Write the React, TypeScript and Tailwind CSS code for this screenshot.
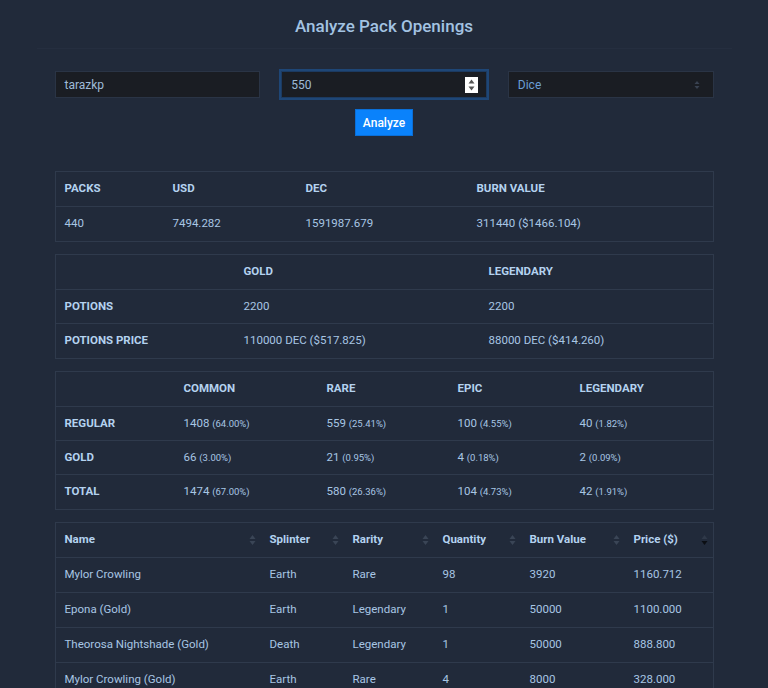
import React from "react";

const txt = "text-[#a8c6e4]";
const head = "text-[#b4d2ef]";

function SortIcon({ active }: { active?: boolean }) {
  return (
    <svg
      width="7"
      height="12"
      viewBox="0 0 7 12"
      className="absolute right-[5px] top-1/2 -translate-y-1/2"
    >
      <path d="M0.5 5 L3.5 1 L6.5 5 Z" fill={active ? "#2f3949" : "#3a4556"} />
      <path d="M0.5 7 L3.5 11 L6.5 7 Z" fill={active ? "#0b0e13" : "#3a4556"} />
    </svg>
  );
}

type Cell = React.ReactNode;

function Grid({
  cols,
  header,
  rows,
  boldFirst,
}: {
  cols: string;
  header: Cell[];
  rows: Cell[][];
  boldFirst?: boolean;
}) {
  return (
    <div className="border border-[#2f3a4c]">
      <div className={`grid ${cols} h-[35px] items-center border-b border-[#2f3a4c]`}>
        {header.map((h, i) => (
          <div key={i} className={`pl-[9px] text-[11.5px] font-bold ${head}`}>
            {h}
          </div>
        ))}
      </div>
      {rows.map((r, ri) => (
        <div
          key={ri}
          className={`grid ${cols} h-[34px] items-center ${
            ri < rows.length - 1 ? "border-b border-[#2f3a4c]" : ""
          }`}
        >
          {r.map((c, ci) => (
            <div
              key={ci}
              className={`pl-[9px] text-[11.5px] ${boldFirst && ci === 0 ? `font-bold ${head}` : txt}`}
            >
              {c}
            </div>
          ))}
        </div>
      ))}
    </div>
  );
}

const P = ({ n, p }: { n: string; p: string }) => (
  <span>
    {n} <span className="text-[9.5px]">({p})</span>
  </span>
);

export default function App() {
  const cardCols = "grid-cols-[205px_83px_90px_87px_104px_1fr]";
  const cards = [
    ["Mylor Crowling", "Earth", "Rare", "98", "3920", "1160.712"],
    ["Epona (Gold)", "Earth", "Legendary", "1", "50000", "1100.000"],
    ["Theorosa Nightshade (Gold)", "Death", "Legendary", "1", "50000", "888.800"],
    ["Mylor Crowling (Gold)", "Earth", "Rare", "4", "8000", "328.000"],
    ["Venari Wavesmith", "Water", "Rare", "10", "400", "120.000"],
  ];
  const cardHead = ["Name", "Splinter", "Rarity", "Quantity", "Burn Value", "Price ($)"];
  return (
    <div className="min-h-screen bg-[#212a3a] font-['Roboto',sans-serif] pb-10">
      <div className="mx-auto w-[659px]">
        <h1 className="pt-[15px] text-center text-[17px] leading-[23px] font-medium text-[#a3c3e2]">
          Analyze Pack Openings
        </h1>
        <div className="mt-[10px] -mx-[18px] border-t border-[#252e3f]" />
        <div className="mt-[22px] grid grid-cols-3 gap-[21px]">
          <div className="h-[27px] bg-[#1a1d23] border border-[#2a3445] flex items-center pl-[9px] text-[12px] text-[#9fbbd8]">
            tarazkp
          </div>
          <div className="relative h-[27px] bg-[#1a1d23] border border-[#1c3a60] outline outline-[2px] outline-[#1e4676] flex items-center pl-[9px] text-[12px] text-[#9fbbd8]">
            550
            <div className="absolute right-[8px] top-[5px] w-[13px] h-[16px] bg-white flex flex-col items-center justify-center gap-[2px]">
              <svg width="7" height="5" viewBox="0 0 7 5">
                <path d="M0.5 4.5 L3.5 0.5 L6.5 4.5 Z" fill="#555" />
              </svg>
              <svg width="7" height="5" viewBox="0 0 7 5">
                <path d="M0.5 0.5 L3.5 4.5 L6.5 0.5 Z" fill="#555" />
              </svg>
            </div>
          </div>
          <div className="relative h-[27px] bg-[#1a1d23] border border-[#2a3445] flex items-center pl-[9px] text-[12px] text-[#6a9fd6]">
            Dice
            <svg
              width="6"
              height="10"
              viewBox="0 0 6 10"
              className="absolute right-[13px] top-1/2 -translate-y-1/2"
            >
              <path d="M0.5 4 L3 1 L5.5 4 Z" fill="#3a4352" />
              <path d="M0.5 6 L3 9 L5.5 6 Z" fill="#3a4352" />
            </svg>
          </div>
        </div>
        <div className="mt-[11px] flex justify-center">
          <button className="h-[27px] w-[58px] bg-[#0a82fb] border border-[#0a6fd8] text-white text-[12px] font-medium">
            Analyze
          </button>
        </div>

        <div className="mt-[35px]">
          <Grid
            cols="grid-cols-[108px_133px_171px_1fr]"
            header={["PACKS", "USD", "DEC", "BURN VALUE"]}
            rows={[["440", "7494.282", "1591987.679", "311440 ($1466.104)"]]}
          />
        </div>
        <div className="mt-[12px]">
          <Grid
            cols="grid-cols-[179px_245px_1fr]"
            header={["", "GOLD", "LEGENDARY"]}
            boldFirst
            rows={[
              ["POTIONS", "2200", "2200"],
              ["POTIONS PRICE", "110000 DEC ($517.825)", "88000 DEC ($414.260)"],
            ]}
          />
        </div>
        <div className="mt-[12px]">
          <Grid
            cols="grid-cols-[119px_143px_131px_122px_1fr]"
            header={["", "COMMON", "RARE", "EPIC", "LEGENDARY"]}
            boldFirst
            rows={[
              [
                "REGULAR",
                <P n="1408" p="64.00%" />,
                <P n="559" p="25.41%" />,
                <P n="100" p="4.55%" />,
                <P n="40" p="1.82%" />,
              ],
              [
                "GOLD",
                <P n="66" p="3.00%" />,
                <P n="21" p="0.95%" />,
                <P n="4" p="0.18%" />,
                <P n="2" p="0.09%" />,
              ],
              [
                "TOTAL",
                <P n="1474" p="67.00%" />,
                <P n="580" p="26.36%" />,
                <P n="104" p="4.73%" />,
                <P n="42" p="1.91%" />,
              ],
            ]}
          />
        </div>

        <div className="mt-[12px] border border-[#2f3a4c]">
          <div className={`grid ${cardCols} h-[35px] items-center border-b border-[#2f3a4c]`}>
            {cardHead.map((h, i) => (
              <div key={i} className={`relative h-full flex items-center pl-[9px] text-[11.5px] font-bold ${head}`}>
                {h}
                <SortIcon active={i === cardHead.length - 1} />
              </div>
            ))}
          </div>
          {cards.map((r, ri) => (
            <div
              key={ri}
              className={`grid ${cardCols} h-[35px] items-center ${ri < cards.length - 1 ? "border-b border-[#2f3a4c]" : ""}`}
            >
              {r.map((c, ci) => (
                <div key={ci} className={`pl-[9px] text-[11.5px] ${txt}`}>
                  {c}
                </div>
              ))}
            </div>
          ))}
        </div>
      </div>
    </div>
  );
}
